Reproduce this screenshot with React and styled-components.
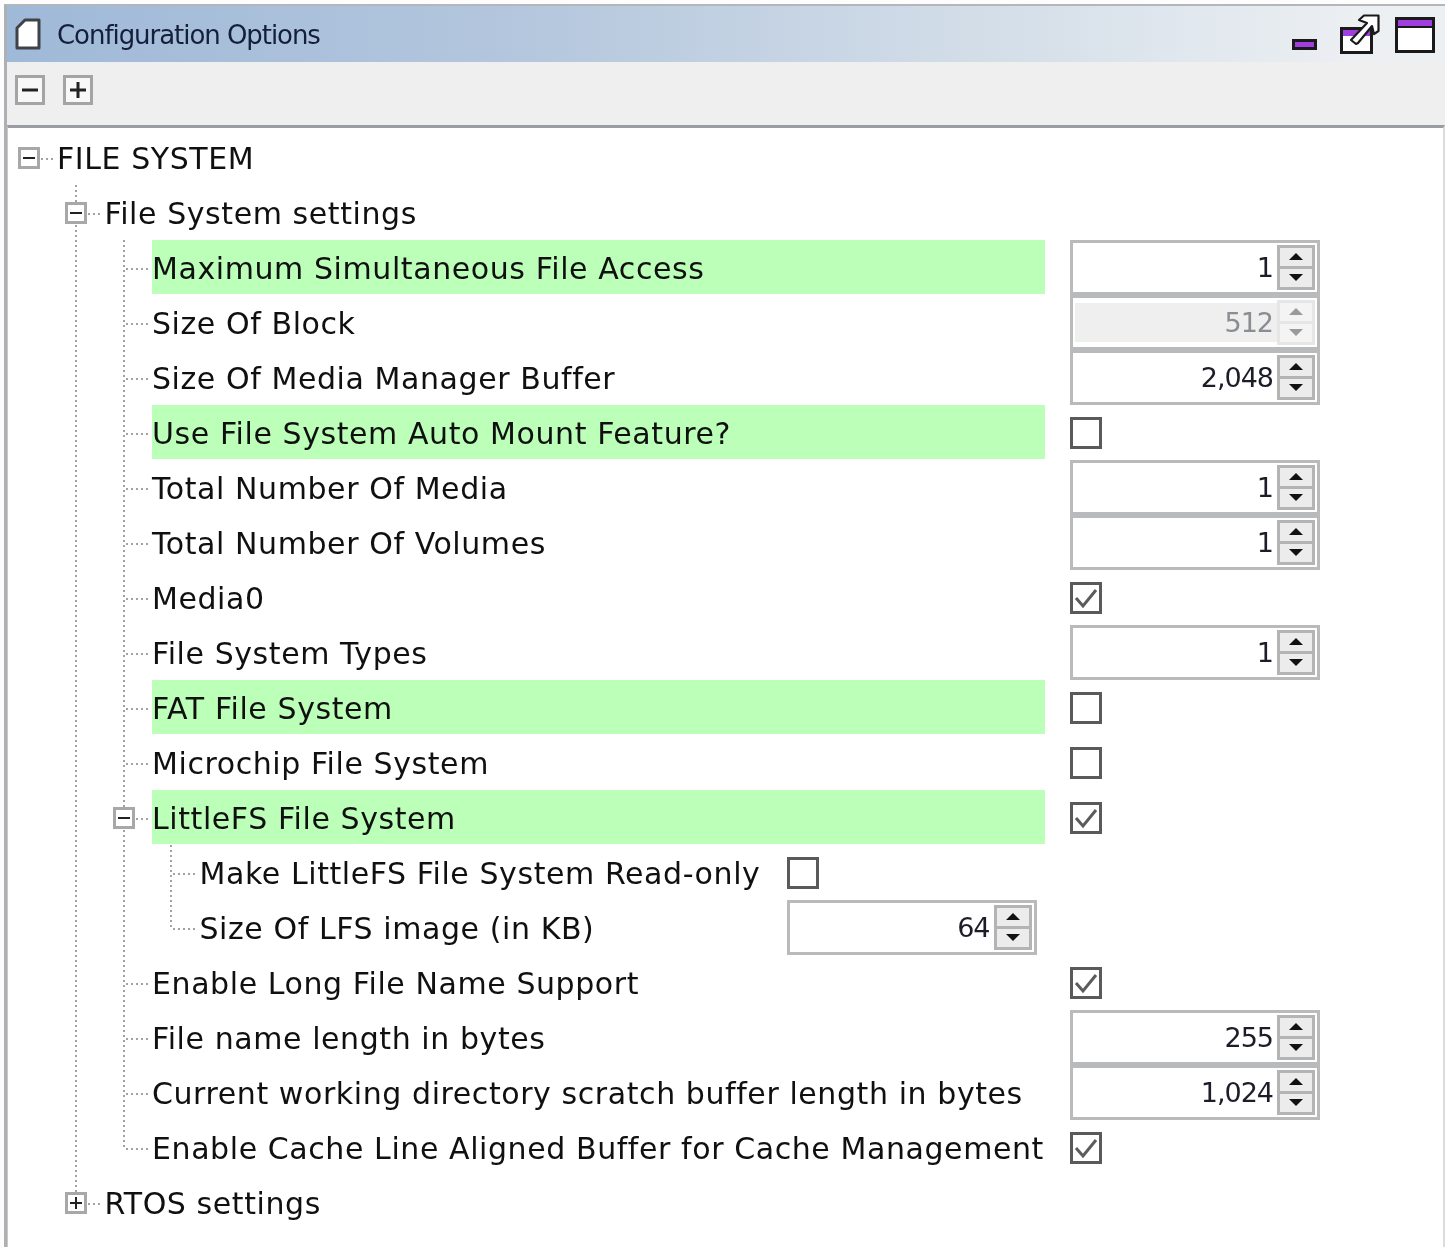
import React from 'react';
import styled, { createGlobalStyle } from 'styled-components';

const GlobalStyle = createGlobalStyle`
  html, body {
    margin: 0;
    padding: 0;
    background: #ffffff;
  }
  body {
    font-family: "DejaVu Sans", "Liberation Sans", sans-serif;
  }
`;

const rows = [
  { label: 'File System settings', guides: [null, 'boxOpen'], expander: true },
  { label: 'Maximum Simultaneous File Access', guides: [null, 'line', 'tee'], hi: true, spin: '1' },
  { label: 'Size Of Block', guides: [null, 'line', 'tee'], spin: '512', disabled: true },
  { label: 'Size Of Media Manager Buffer', guides: [null, 'line', 'tee'], spin: '2,048' },
  { label: 'Use File System Auto Mount Feature?', guides: [null, 'line', 'tee'], hi: true, check: false },
  { label: 'Total Number Of Media', guides: [null, 'line', 'tee'], spin: '1' },
  { label: 'Total Number Of Volumes', guides: [null, 'line', 'tee'], spin: '1' },
  { label: 'Media0', guides: [null, 'line', 'tee'], check: true },
  { label: 'File System Types', guides: [null, 'line', 'tee'], spin: '1' },
  { label: 'FAT File System', guides: [null, 'line', 'tee'], hi: true, check: false },
  { label: 'Microchip File System', guides: [null, 'line', 'tee'], check: false },
  { label: 'LittleFS File System', guides: [null, 'line', 'boxOpen'], hi: true, check: true },
  { label: 'Make LittleFS File System Read-only', guides: [null, 'line', 'line', 'tee'], check: false, nested: true },
  { label: 'Size Of LFS image (in KB)', guides: [null, 'line', 'line', 'end'], spin: '64', nested: true },
  { label: 'Enable Long File Name Support', guides: [null, 'line', 'tee'], check: true },
  { label: 'File name length in bytes', guides: [null, 'line', 'tee'], spin: '255' },
  { label: 'Current working directory scratch buffer length in bytes', guides: [null, 'line', 'tee'], spin: '1,024' },
  { label: 'Enable Cache Line Aligned Buffer for Cache Management', guides: [null, 'line', 'end'], check: true },
];

const Panel = styled.div`
  width: 1445px;
  height: 1247px;
  overflow: hidden;
  box-sizing: border-box;
  padding: 4px 0 0 4px;
  background: #fdfdfd;
  filter: blur(0.55px);
`;

const Frame = styled.div`
  height: 100%;
  border-top: 2px solid #b4b6b9;
  border-left: 3px solid #aeb0b4;
  display: flex;
  flex-direction: column;
  background: #efefef;
`;

const TitleBar = styled.div`
  height: 56px;
  flex: none;
  display: flex;
  align-items: center;
  padding-left: 8px;
  background: linear-gradient(to right, #9fb9d8 0%, #b3c6dd 35%, #d5dfe9 70%, #edf0f3 95%);
`;

const Title = styled.span`
  margin-left: 16px;
  padding-top: 1px;
  font-size: 26px;
  letter-spacing: -1.05px;
  color: #141f3a;
`;

const WindowButtons = styled.div`
  margin-left: auto;
  margin-right: 10px;
  display: flex;
  gap: 15px;
  height: 40px;
`;

const Toolbar = styled.div`
  height: 63px;
  flex: none;
  display: flex;
  align-items: flex-start;
  gap: 18px;
  padding: 13px 0 0 8px;
  box-sizing: border-box;
`;

const ToolButton = styled.button`
  width: 30px;
  height: 30px;
  padding: 0;
  border: 3px solid #a4a4a4;
  background: #f8f8f8;
  display: flex;
  align-items: center;
  justify-content: center;
`;

const Tree = styled.div`
  flex: 1;
  border-top: 3px solid #9a9da3;
  border-left: 1px solid #c8c8c8;
  border-right: 2px solid #dcdcdc;
  background: #ffffff;
  padding: 1.5px 0 0 1.5px;
  min-height: 0;
`;

const Row = styled.div`
  height: 55px;
  display: flex;
  align-items: center;
`;

const Guide = styled.div`
  position: relative;
  width: 47.5px;
  flex: none;
  align-self: stretch;

  ${(p) => (p.$vertical ? `
    &::before {
      content: "";
      position: absolute;
      left: 18px;
      top: 0;
      width: 2px;
      height: ${p.$vertical === 'half' ? '50%' : '100%'};
      background: repeating-linear-gradient(to bottom, #a2a2a2 0 2px, transparent 2px 5px);
    }
  ` : '')}

  ${(p) => (p.$horizontal ? `
    &::after {
      content: "";
      position: absolute;
      left: 21px;
      right: 4px;
      top: calc(50% + 1px);
      height: 2px;
      background: repeating-linear-gradient(to right, #a2a2a2 0 2px, transparent 2px 5px);
    }
  ` : '')}
`;

const Expander = styled.span`
  position: absolute;
  z-index: 1;
  left: 8px;
  top: calc(50% + 1px);
  width: 22px;
  height: 22px;
  margin-top: -11px;
  box-sizing: border-box;
  border: 3px solid #a8a8a8;
  background: #ffffff;
  display: flex;
  align-items: center;
  justify-content: center;
`;

const Label = styled.div`
  width: ${(p) => (p.$nested ? '562px' : '893px')};
  height: 54px;
  box-sizing: border-box;
  padding-top: 2px;
  margin-right: 25px;
  flex: none;
  display: flex;
  align-items: center;
  white-space: nowrap;
  font-size: 30px;
  letter-spacing: 0.58px;
  color: #101010;
  background: ${(p) => (p.$hi ? '#bbffb8' : 'transparent')};
`;

const RootLabel = styled(Label)`
  width: auto;
`;

const Spinner = styled.div`
  width: 250px;
  height: 55px;
  flex: none;
  box-sizing: border-box;
  border: 3px solid #b8babc;
  padding: 2px;
  display: flex;
  align-items: stretch;
  background: #ffffff;
`;

const SpinValue = styled.div`
  flex: 1;
  display: flex;
  align-items: center;
  justify-content: flex-end;
  padding-right: 4px;
  margin: ${(p) => (p.$disabled ? '3px 0' : '0')};
  font-size: 27px;
  letter-spacing: -1px;
  color: ${(p) => (p.$disabled ? '#8a8d92' : '#1d1d2a')};
  background: ${(p) => (p.$disabled ? '#efefef' : '#ffffff')};
`;

const SpinButtons = styled.div`
  width: 38px;
  flex: none;
  display: flex;
  flex-direction: column;
  box-sizing: border-box;
  border: 3px solid ${(p) => (p.$disabled ? '#e6e6e6' : '#b4b4b4')};
  background: ${(p) => (p.$disabled ? '#f4f4f4' : '#ececec')};
`;

const SpinButton = styled.div`
  flex: 1;
  display: flex;
  align-items: center;
  justify-content: center;
  border-top: ${(p) => (p.$down ? `3px solid ${p.$disabled ? '#e6e6e6' : '#b4b4b4'}` : 'none')};
`;

const Arrow = styled.span`
  width: 0;
  height: 0;
  border-left: 7px solid transparent;
  border-right: 7px solid transparent;
  ${(p) => (p.$down ? 'border-top' : 'border-bottom')}: 7px solid ${(p) => (p.$disabled ? '#9a9a9a' : '#111111')};
`;

const CheckBox = styled.div`
  width: 32px;
  height: 32px;
  margin-top: 2px;
  flex: none;
  box-sizing: border-box;
  border: 3px solid #5a5a5a;
  background: #ffffff;
`;

const PageIcon = () => (
  <svg width="26" height="32" viewBox="0 0 26 32">
    <path d="M10 2H24V30H2V10Z" fill="#ffffff" stroke="#3f4348" strokeWidth="3" strokeLinejoin="round" />
  </svg>
);

const MinimizeIcon = () => (
  <svg width="33" height="40" viewBox="0 0 33 40">
    <rect x="1.5" y="26.5" width="22" height="8" fill="#a03ee0" stroke="#1a1a1a" strokeWidth="3" />
  </svg>
);

const RestoreIcon = () => (
  <svg width="40" height="40" viewBox="0 0 40 40">
    <rect x="1.5" y="14.5" width="30" height="24" fill="#ffffff" stroke="#1a1a1a" strokeWidth="3" />
    <rect x="3" y="16" width="27" height="6" fill="#a03ee0" />
    <path d="M16 30L11 26L27 9L19 6L24 1.5H38.5V17L34 20L32 12L18 29Z" fill="#ffffff" stroke="#1a1a1a" strokeWidth="2.2" strokeLinejoin="round" />
  </svg>
);

const MaximizeIcon = () => (
  <svg width="40" height="40" viewBox="0 0 40 40">
    <rect x="1.5" y="4.5" width="37" height="33" fill="#ffffff" stroke="#1a1a1a" strokeWidth="3" />
    <rect x="3" y="6" width="34" height="6" fill="#a03ee0" />
    <rect x="3" y="12" width="34" height="2" fill="#1a1a1a" />
  </svg>
);

const Sign = ({ plus, size = 14, weight = 2 }) => (
  <svg width={size} height={size} viewBox={`0 0 ${size} ${size}`}>
    <rect x="0" y={(size - weight) / 2} width={size} height={weight} fill="#222222" />
    {plus && <rect x={(size - weight) / 2} y="0" width={weight} height={size} fill="#222222" />}
  </svg>
);

const TickIcon = () => (
  <svg width="26" height="26" viewBox="0 0 26 26">
    <path d="M3 13L10 21L23 5" fill="none" stroke="#5c5c5c" strokeWidth="3" />
  </svg>
);

const TreeGuide = ({ type }) => {
  if (!type) return <Guide />;
  if (type === 'line') return <Guide $vertical="full" />;
  if (type === 'tee') return <Guide $vertical="full" $horizontal />;
  if (type === 'end') return <Guide $vertical="half" $horizontal />;
  const closed = type === 'boxClosed';
  return (
    <Guide $vertical={type === 'boxRoot' ? undefined : closed ? 'half' : 'full'} $horizontal>
      <Expander>
        <Sign plus={closed} size={12} />
      </Expander>
    </Guide>
  );
};

const Spin = ({ value, disabled }) => (
  <Spinner>
    <SpinValue $disabled={disabled}>{value}</SpinValue>
    <SpinButtons $disabled={disabled}>
      <SpinButton>
        <Arrow $disabled={disabled} />
      </SpinButton>
      <SpinButton $down $disabled={disabled}>
        <Arrow $down $disabled={disabled} />
      </SpinButton>
    </SpinButtons>
  </Spinner>
);

const App = () => {
  return (
    <>
      <GlobalStyle />
      <Panel>
        <Frame>
          <TitleBar>
            <PageIcon />
            <Title>Configuration Options</Title>
            <WindowButtons>
              <MinimizeIcon />
              <RestoreIcon />
              <MaximizeIcon />
            </WindowButtons>
          </TitleBar>
          <Toolbar>
            <ToolButton>
              <Sign size={16} weight={3} />
            </ToolButton>
            <ToolButton>
              <Sign plus size={16} weight={3} />
            </ToolButton>
          </Toolbar>
          <Tree>
            <Row>
              <TreeGuide type="boxRoot" />
              <RootLabel>FILE SYSTEM</RootLabel>
            </Row>
            {rows.map((row) => (
              <Row key={row.label}>
                {row.guides.map((g, i) => (
                  <TreeGuide key={i} type={g} />
                ))}
                {row.expander ? (
                  <RootLabel>{row.label}</RootLabel>
                ) : (
                  <Label $hi={row.hi} $nested={row.nested}>{row.label}</Label>
                )}
                {row.spin && <Spin value={row.spin} disabled={row.disabled} />}
                {row.check === true && (
                  <CheckBox>
                    <TickIcon />
                  </CheckBox>
                )}
                {row.check === false && <CheckBox />}
              </Row>
            ))}
            <Row>
              <TreeGuide />
              <TreeGuide type="boxClosed" />
              <RootLabel>RTOS settings</RootLabel>
            </Row>
          </Tree>
        </Frame>
      </Panel>
    </>
  );
};

export default App;
